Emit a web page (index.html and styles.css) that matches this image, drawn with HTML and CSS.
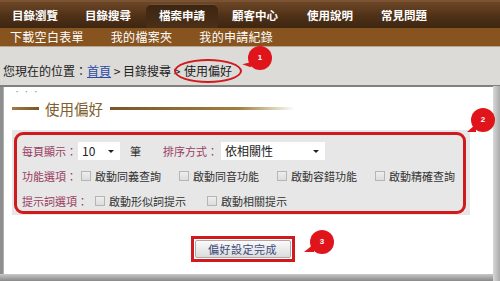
FILE: index.html
```html
<!DOCTYPE html>
<html>
<head>
<meta charset="utf-8">
<link rel="stylesheet" href="styles.css">
</head>
<body>
<div class="page">
  <nav class="nav">
    <span class="tab">目錄瀏覽</span>
    <span class="tab">目錄搜尋</span>
    <span class="tab active">檔案申請</span>
    <span class="tab">顧客中心</span>
    <span class="tab">使用說明</span>
    <span class="tab">常見問題</span>
  </nav>
  <nav class="subnav">
    <span class="sub">下載空白表單</span>
    <span class="sub">我的檔案夾</span>
    <span class="sub">我的申請紀錄</span>
  </nav>
  <div class="crumb">您現在的位置：<a class="home">首頁</a> &gt; 目錄搜尋 &gt; <span class="cur">使用偏好</span></div>
  <div class="panel">
    <div class="dots">• • •</div>
    <div class="heading"><span class="hl-left"></span><span class="htext">使用偏好</span><span class="hl-right"></span></div>
    <div class="settings">
      <div class="row">
        <span class="label">每頁顯示：</span>
        <span class="select small">10<span class="arrow"></span></span>
        <span class="unit">筆</span>
        <span class="label sort">排序方式：</span>
        <span class="select wide">依相關性<span class="arrow"></span></span>
      </div>
      <div class="row">
        <span class="label">功能選項：</span>
        <span class="opt first"><span class="cb"></span>啟動同義查詢</span>
        <span class="opt"><span class="cb"></span>啟動同音功能</span>
        <span class="opt"><span class="cb"></span>啟動容錯功能</span>
        <span class="opt"><span class="cb"></span>啟動精確查詢</span>
      </div>
      <div class="row hints">
        <span class="label">提示詞選項：</span>
        <span class="opt first"><span class="cb"></span>啟動形似詞提示</span>
        <span class="opt"><span class="cb"></span>啟動相關提示</span>
      </div>
      <div class="redbox"></div>
    </div>
    <div class="actions">
      <span class="btnwrap"><button class="btn">偏好設定完成</button></span>
    </div>
  </div>
  <div class="ellipse"></div>
  <div class="badge b1">1</div>
  <div class="badge b2">2</div>
  <div class="badge b3">3</div>
</div>
</body>
</html>
```
FILE: styles.css
```css
* { box-sizing: border-box; }
html, body { margin: 0; padding: 0; background: #fff; }
body { font-family: "Noto Sans CJK TC", "Noto Sans", sans-serif; width: 500px; height: 281px; overflow: hidden; }
.page { position: relative; width: 500px; height: 281px; background: #8e8e8e; }

.nav { height: 28px; display: flex; align-items: flex-end; padding-left: 12px; white-space: nowrap;
  background: linear-gradient(#6d4626, #4c2f16 60%, #3e2612); border-top: 2px solid #7a5432; }
.tab { flex-shrink: 0; color: #fff; font-size: 11.5px; font-weight: bold; height: 24px; line-height: 22px;
  margin-right: 27px; }
.tab:nth-child(2) { margin-right: 15px; }
.tab.active { background: linear-gradient(#3c2511, #4b3017); border-radius: 5px 5px 0 0;
  padding: 0 13px; margin-right: 14px; box-shadow: inset 0 1px 0 #6e5036; }
.tab:nth-child(4) { margin-right: 29px; }
.tab:nth-child(5) { margin-right: 28px; }

.subnav { height: 18px; display: flex; align-items: center; background: #875420; padding-left: 10px; white-space: nowrap; }
.sub { flex-shrink: 0; color: #fff; font-size: 12px; line-height: 18px; margin-right: 27px; letter-spacing: 0.3px; }

.crumb { height: 41px; background: #dcdbd8; border-bottom: 2px solid #808080; border-top: 1px solid #b8a58f;
  font-size: 12px; color: #222; padding: 15px 0 0 3px; line-height: 18px; white-space: nowrap; }
.home { color: #2a4aa8; text-decoration: underline; }
.cur { margin-left: 1px; }

.panel { position: relative; margin-left: 3px; width: 490px; height: 188px; background: #fff;
  border-left: 1px solid #b0b0b0; padding: 0 0 0 8px; }
.dots { font-size: 6px; color: #888; line-height: 6px; height: 8px; padding: 2px 0 0 2px; letter-spacing: 1px; overflow: hidden; }
.heading { display: flex; align-items: center; height: 26px; margin-top: 0; }
.hl-left { width: 27px; height: 3px; background: linear-gradient(90deg, #a07a3c, #7b5526); margin-right: 6px; }
.htext { font-size: 14.5px; color: #80602e; white-space: nowrap; }
.hl-right { width: 185px; height: 3px; background: linear-gradient(90deg, #7b5526, #a0803e 70%, rgba(200,170,110,0)); margin-left: 7px; }

.settings { position: relative; margin-top: 9px; width: 458px; height: 85px; background: #e7e7e7;
  padding: 8px 0 0 10px; }
.row { display: flex; align-items: center; height: 25px; font-size: 11px; color: #333; white-space: nowrap; }
.row > * { flex-shrink: 0; }
.label { color: #9a3c62; }
.sort { margin-left: 22px; }
.unit { margin-left: 10px; }
.select { position: relative; background: #fff; height: 18px; line-height: 18px; font-size: 12px; color: #222;
  padding-left: 4px; margin-left: 1px; }
.select.small { width: 42px; }
.select.wide { width: 104px; margin-left: 3px; }
.arrow { position: absolute; right: 6px; top: 8px; width: 0; height: 0;
  border-left: 3px solid transparent; border-right: 3px solid transparent; border-top: 3px solid #222; }
.opt { display: flex; align-items: center; margin-right: 18px; }
.opt.first { margin-left: 4px; }
.hints .opt.first { margin-left: 7px; margin-right: 21px; }
.cb { width: 10px; height: 10px; border: 1px solid #b5b5b5; background: linear-gradient(#eee, #ddd);
  margin-right: 4px; flex-shrink: 0; }
.redbox { position: absolute; left: 2px; top: 2px; width: 452px; height: 82px; border: 3px solid #d01a1e; border-radius: 9px; }

.actions { display: flex; justify-content: center; margin-top: 21px; padding-right: 20px; }
.btnwrap { border: 3px solid #d01a1e; padding: 1px; }
.btn { font-family: inherit; font-size: 11px; color: #3c4c7c; width: 96px; height: 18px; padding: 0; letter-spacing: 0.5px;
  border: 1px solid #aaa; background: linear-gradient(#fafafa, #dcdcdc); border-radius: 2px; display: block; }

.page::after { content: ""; position: absolute; left: 0; right: 0; bottom: 0; height: 7px;
  background: linear-gradient(#c8c8c8, #888); }
.page::before { content: ""; position: absolute; right: 0; top: 86px; bottom: 0; width: 7px;
  background: linear-gradient(90deg, #d8d8d8, #aaa); z-index: 1; }

.ellipse { position: absolute; left: 174px; top: 59px; width: 68px; height: 24px; border: 2px solid #d01a1e; border-radius: 50%; }
.badge { position: absolute; width: 24px; height: 24px; border-radius: 50%; background: #e0151c; color: #fff;
  font-size: 8px; font-weight: bold; text-align: center; line-height: 24px; font-family: "Liberation Sans", sans-serif; z-index: 2; }
.badge::after { content: ""; position: absolute; width: 0; height: 0; }
.b1 { left: 248px; top: 46px; }
.b1::after { left: -5px; top: 14px; border-top: 6px solid transparent; border-right: 9px solid #e0151c; transform: rotate(20deg); }
.b2 { left: 471px; top: 108px; }
.b2::after { left: -4px; top: 16px; border-top: 8px solid transparent; border-right: 9px solid #e0151c; }
.b3 { left: 310px; top: 230px; }
.b3::after { left: -6px; top: 14px; border-top: 8px solid transparent; border-right: 10px solid #e0151c; }
```
